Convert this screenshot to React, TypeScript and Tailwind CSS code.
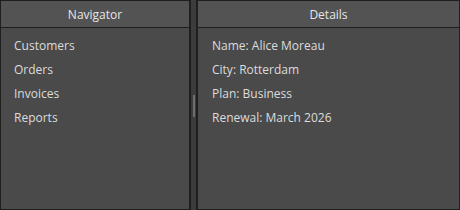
import React from "react";

const font = { fontFamily: '"Open Sans", "Noto Sans", sans-serif' };

function Panel({ title, items, className, padClass }: { title: string; items: string[]; className: string; padClass: string }) {
  return (
    <div className={`flex flex-col border border-[#1f1f1f] bg-[#4a4a4a] ${className}`}>
      <div className="flex h-[27px] items-center justify-center border-b border-[#1f1f1f] bg-[#535353] pt-[2px] text-[12px] text-[#e6e6e6]">
        {title}
      </div>
      <div className={`flex flex-col pt-[6px] ${padClass}`}>
        {items.map((t) => (
          <div key={t} className="h-6 leading-6 text-[12px] text-[#dcdcdc]">
            {t}
          </div>
        ))}
      </div>
    </div>
  );
}

export default function App() {
  return (
    <div className="flex h-[210px] w-[460px] bg-[#2a2a2a]" style={font}>
      <Panel
        title="Navigator"
        items={["Customers", "Orders", "Invoices", "Reports"]}
        className="w-[190px]"
        padClass="pl-[13px]"
      />
      <div className="flex w-[7px] justify-center border-x border-[#1f1f1f] bg-[#3c3c3c]">
        <div className="mt-[95px] h-[22px] w-[2px] bg-[#6e6e6e]" />
      </div>
      <Panel
        title="Details"
        items={["Name: Alice Moreau", "City: Rotterdam", "Plan: Business", "Renewal: March 2026"]}
        className="flex-1"
        padClass="pl-[14px]"
      />
    </div>
  );
}
